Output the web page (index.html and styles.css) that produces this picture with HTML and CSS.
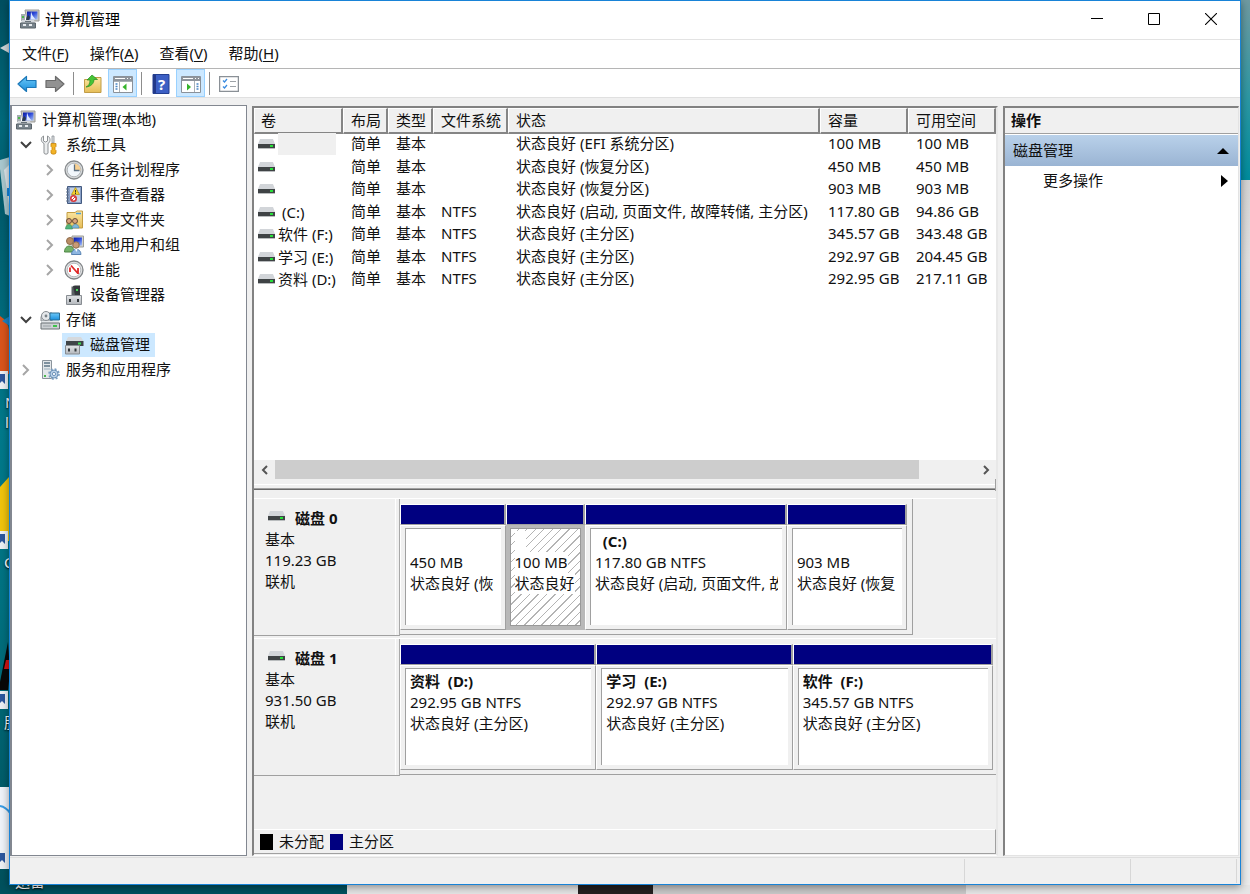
FILE: index.html
```html
<!DOCTYPE html>
<html lang="zh-CN">
<head>
<meta charset="utf-8">
<title>计算机管理</title>
<link rel="stylesheet" href="styles.css">
</head>
<body>
<svg class="defs" aria-hidden="true">
  <defs>
    <linearGradient id="g-screen" x1="0" y1="0" x2="1" y2="1"><stop offset="0" stop-color="#0a1a9c"/><stop offset=".45" stop-color="#2a46d8"/><stop offset="1" stop-color="#a9c4f5"/></linearGradient>
    <linearGradient id="g-case" x1="0" y1="0" x2="0" y2="1"><stop offset="0" stop-color="#e2e4e6"/><stop offset="1" stop-color="#b4b8bd"/></linearGradient>
    <linearGradient id="g-blue" x1="0" y1="0" x2="0" y2="1"><stop offset="0" stop-color="#6cc8f8"/><stop offset="1" stop-color="#1a8fdc"/></linearGradient>
    <linearGradient id="g-folder" x1="0" y1="0" x2="0" y2="1"><stop offset="0" stop-color="#fbe7a4"/><stop offset="1" stop-color="#e6bd58"/></linearGradient>
    <symbol id="i-computer" viewBox="0 0 20 20">
      <path d="M5 1h14v11H7z" fill="#c9c9c4" stroke="#9a9a98"/><path d="M7 2.500h10.500v8H7z" fill="url(#g-screen)"/>
      <path d="M11 2.500l1.500 4 3 4h-5z" fill="#dce8ff"/><path d="M1 5h4v7H1z" fill="#a7adb3"/><path d="M2 7h2v2H2z" fill="#4db84a"/>
      <path d="M6 12c0-3 1-5 2.500-6l1.500 2-1 4z" fill="#2b3950"/><path d="M2 11h12l1 3H1z" fill="#d2d6da"/>
      <path d="M.500 14h15v5H.500z" fill="#79848c" stroke="#5b646b"/><path d="M3 15h3v2H3zM9 15h3v2H9z" fill="#e8ecef"/><path d="M5 12.500h6" stroke="#68727a" fill="none"/>
    </symbol>
    <symbol id="i-tools" viewBox="0 0 20 20">
      <path d="M3.500 1v5l2 1 2-1V1c3 1 3.500 6 .500 7.500V18c0 1.500-4 1.500-4 0V8.500C0 6.500 1 2 3.500 1z" fill="#eceeef" stroke="#8d9194"/>
      <path d="M12 1h2v7h-2z" fill="#dfe3e6" stroke="#8b9094" stroke-width=".8"/><path d="M11 8.500h5v3l-1 1v2l1 1v2.500c0 1.500-5 1.500-5 0v-2.500l1-1v-2l-1-1z" fill="#f2b327" stroke="#c4830c" stroke-width=".8"/>
    </symbol>
    <symbol id="i-clock" viewBox="0 0 20 20">
      <circle cx="10" cy="10" r="9" fill="#d8dadb" stroke="#85898c" stroke-width="1.300"/><circle cx="10" cy="10" r="6.800" fill="#f1f6fb" stroke="#b1b6ba"/>
      <path d="M10.500 3.500a6.500 6.500 0 0 1 6 7h-6z" fill="#f6cf91"/><path d="M10.500 4.500v6h5" fill="none" stroke="#5d7082" stroke-width="1.300"/>
    </symbol>
    <symbol id="i-event" viewBox="0 0 20 20">
      <path d="M3.500 1.500h14v17h-14z" fill="#8aa0c6" stroke="#42597f"/><path d="M6 3h10v14H6z" fill="#c3d0e4"/>
      <path d="M2 4h3M2 7h3M2 10h3M2 13h3M2 16h3" stroke="#66778e" stroke-width="1.200"/><path d="M11.500 2.500l4 7h-8z" fill="#f6d22e" stroke="#b08c0c" stroke-width=".7"/>
      <path d="M11.500 5v2.500M11.500 8v1" stroke="#333"/><circle cx="9.500" cy="13.500" r="2.700" fill="#fff" stroke="#d5363a" stroke-width="1.600"/><path d="M8 15l3-3" stroke="#d5363a"/>
    </symbol>
    <symbol id="i-share" viewBox="0 0 20 20">
      <path d="M3 2.500h8l2-1.500h5.500v17H3z" fill="url(#g-folder)" stroke="#c39d43"/><path d="M12 3.500h5" stroke="#4aa0d8" stroke-width="1.500"/>
      <circle cx="5" cy="11" r="2.500" fill="#d9a57d" stroke="#4b3428" stroke-width=".8"/><circle cx="11" cy="11" r="2.500" fill="#d9a57d" stroke="#4b3428" stroke-width=".8"/>
      <path d="M1.500 19c0-6 7-6 7 0z" fill="#53b57c" stroke="#2e8a59" stroke-width=".6"/><path d="M8 18c0-5 7-5 7 0z" fill="#7db7da" stroke="#4584ae" stroke-width=".6"/>
    </symbol>
    <symbol id="i-users" viewBox="0 0 20 20">
      <path d="M8 1h11.500v11H8z" fill="#d3d3cc" stroke="#9d9d98"/><path d="M9.500 2.500h8.500v8H9.500z" fill="url(#g-screen)"/>
      <circle cx="6" cy="6" r="3.500" fill="#b98c64" stroke="#8f6c4c"/><circle cx="12" cy="10" r="3.200" fill="#c99b75" stroke="#94704f"/>
      <path d="M.500 17C.500 9 10 9 10 17z" fill="#74b26a" stroke="#4c8643"/><path d="M7.500 19.500c0-7 9.500-7 9.500 0z" fill="#8fb7e2" stroke="#5b85b4"/><path d="M11 14l1.300 3 1.300-3z" fill="#fff"/>
    </symbol>
    <symbol id="i-perf" viewBox="0 0 20 20">
      <circle cx="10" cy="10" r="9" fill="#e0e1e2" stroke="#808487" stroke-width="1.300"/><circle cx="10" cy="10" r="6.800" fill="#fff" stroke="#b7babd"/>
      <path d="M6 12V7.500M7 5.500l7 8M14 8v6" fill="none" stroke="#df2828" stroke-width="1.800"/>
    </symbol>
    <symbol id="i-device" viewBox="0 0 20 20">
      <path d="M7.500 1.500h8.500v9H7.500z" fill="#5b6064"/><path d="M9 1l2-.500h5v10h-5z" fill="#34383b"/><path d="M12 4h2v2h-2z" fill="#46d65a"/>
      <path d="M2.500 10.500h15v9h-15z" fill="url(#g-case)" stroke="#888d92"/><path d="M5 14h2v3H5zM13 14h2v3h-2z" fill="#33383c"/>
    </symbol>
    <symbol id="i-storage" viewBox="0 0 20 20">
      <path d="M1 7l2-4h9v8H1z" fill="#cdd1d4" stroke="#8c9195"/><circle cx="6" cy="6" r="4.500" fill="#e4e7ea" stroke="#878d92"/><circle cx="6" cy="6" r="1.400" fill="#7a8288"/>
      <path d="M10 3h9.500v7H10z" fill="url(#g-blue)" stroke="#2b6d92"/><path d="M2 11h17l1 2H1z" fill="#e4e7ea"/><path d="M1 13h18.500v6H1z" fill="#cdd1d4" stroke="#6d7377"/><path d="M13 15h4v2h-4z" fill="#3fc34c"/><path d="M3 16h8" stroke="#9aa0a5"/>
    </symbol>
    <symbol id="i-disks" viewBox="0 0 20 20">
      <path d="M4 2h13l2.500 4H2z" fill="#d5d9dd"/><path d="M2 6h17.500v5H2z" fill="#3f4447"/><path d="M14 7.500h3v2h-3z" fill="#3ddc54"/>
      <path d="M1.500 10.500h14v8.500h-14z" fill="url(#g-case)" stroke="#878c91"/><path d="M4 13.500h2v3H4zM10.500 13.500h2v3h-2z" fill="#33383c"/>
    </symbol>
    <symbol id="i-services" viewBox="0 0 20 20">
      <path d="M2.500.500h9v18h-9z" fill="#e3e7ea" stroke="#8b949c"/><path d="M4 3h6M4 6h6" stroke="#5d7586" stroke-width="1.400"/><path d="M4 9h6" stroke="#9db0bd"/><path d="M4 15h2v2H4z" fill="#48b850"/>
      <circle cx="14" cy="14" r="4" fill="#b9d0e8" stroke="#6f93b8"/><circle cx="14" cy="14" r="5" fill="none" stroke="#7b9dc0" stroke-width="1.600" stroke-dasharray="2 1.930"/><circle cx="14" cy="14" r="1.600" fill="#fff" stroke="#6f93b8"/>
    </symbol>
    <symbol id="i-drive" viewBox="0 0 17 10">
      <path d="M2 0h13l2 5H0z" fill="#d2d5d9"/><path d="M0 5h17v4H0z" fill="#3f4345"/><path d="M0 9h17v1H0z" fill="#b9bcbe"/><path d="M12 6h3v2h-3z" fill="#27e03a"/>
    </symbol>
    <symbol id="i-arrow" viewBox="0 0 20 18">
      <path d="M1 9l8.500-7.500v4H19v7H9.500v4z" stroke-width="1.200" stroke-linejoin="round"/>
    </symbol>
    <symbol id="i-pane" viewBox="0 0 20 18">
      <path d="M.500 1.500h19v16H.500z" fill="#fff" stroke="#8a9199"/><path d="M1 2h18v4H1z" fill="#8d949c"/><path d="M2 3.500h10" stroke="#fff"/><path d="M14 3h1v1h-1zM17 3h1v1h-1z" fill="#fff"/>
      <path d="M6.500 6v11M1 6.500h18" stroke="#a9b0b6"/><path d="M2.500 9h2M2.500 11.500h2M2.500 14h2" stroke="#4a86c4" stroke-width="1.300"/>
    </symbol>
  </defs>
</svg>

<div class="desktop" aria-hidden="true">
  <svg class="desktop-art" width="16" height="894" viewBox="0 0 16 894">
    <path d="M0 48l9-5v10z" fill="#cfd6da"/><path d="M0 160l10-3v59l-5-2-5-45z" fill="#a9c8cf"/><path d="M4 170l6-6v48z" fill="#dfe8ec"/><path d="M7 188h4v8H7z" fill="#1687dc"/>
    <path d="M0 316q8 5 9 14v44H0z" fill="#d9541c"/><path d="M2 321l8-5v10z" fill="#1c83c4"/>
    <path d="M0 487l9-10v64H0z" fill="#f0c30c"/>
    <path d="M8 642l2 30-2 18H0v-8z" fill="#080808"/><path d="M6 660h4v9H4z" fill="#d41414"/><path d="M0 787h10v82H0z" fill="#eef3f9"/><path d="M0 806q6 1 10 7" fill="none" stroke="#379ce4" stroke-width="2"/>
    <g fill="#edf1f4"><path d="M0 371h8v18H0zM0 531h8v18H0zM0 691h8v18H0zM0 850h8v18H0z"/></g>
    <g fill="#2c579d"><path d="M0 374h5v10l-3-3-2 2zM0 534h5v10l-3-3-2 2zM0 694h5v10l-3-3-2 2zM0 853h5v10l-3-3-2 2z"/></g>
  </svg>
  <span class="desktop-label label-n">N</span>
  <span class="desktop-label label-l">l</span>
  <span class="desktop-label label-c">C</span>
  <span class="desktop-label label-g">股</span>
  <span class="desktop-label label-x">迅雷</span>
</div>

<main class="window">
  <header class="titlebar">
    <svg class="icon"><use href="#i-computer"/></svg>
    <h1 class="title">计算机管理</h1>
    <button class="win-btn" aria-label="最小化"><svg width="12" height="12"><path d="M0 5.500h12" stroke="#000"/></svg></button>
    <button class="win-btn" aria-label="最大化"><svg width="12" height="12"><path d="M.500.500h11v11H.500z" fill="none" stroke="#000"/></svg></button>
    <button class="win-btn" aria-label="关闭"><svg width="12" height="12"><path d="M0 0l12 12M12 0L0 12" stroke="#000" stroke-width="1.100"/></svg></button>
  </header>

  <nav class="menubar">
    <button class="menu">文件(<u>F</u>)</button>
    <button class="menu">操作(<u>A</u>)</button>
    <button class="menu">查看(<u>V</u>)</button>
    <button class="menu">帮助(<u>H</u>)</button>
  </nav>

  <div class="toolbar">
    <button class="tool" aria-label="后退"><svg width="20" height="18" fill="url(#g-blue)" stroke="#1c78b8"><use href="#i-arrow"/></svg></button>
    <button class="tool" aria-label="前进"><svg class="flip" width="20" height="18" fill="#929292" stroke="#6b6b6b"><use href="#i-arrow"/></svg></button>
    <span class="tool-sep"></span>
    <button class="tool" aria-label="上移"><svg width="20" height="20" viewBox="0 0 20 20"><path d="M1.500 5.500h6l2-2h8.500v15h-16.500z" fill="url(#g-folder)" stroke="#c19c47"/><path d="M3 13c3-1 4-4 4-7H4l5-5 5.500 4.500H11c0 4-3 7-8 7.500z" fill="#45c437" stroke="#278c20" stroke-width=".7"/></svg></button>
    <button class="tool tool-on" aria-label="显示/隐藏控制台树"><svg width="20" height="18" viewBox="0 0 20 18"><use href="#i-pane"/><path d="M13.500 8.500v7l-4-3.500z" fill="#35b42b"/></svg></button>
    <span class="tool-sep"></span>
    <button class="tool" aria-label="帮助"><svg width="18" height="20" viewBox="0 0 18 20"><path d="M1 .500h16v19H1z" fill="#3c5fc4" stroke="#233f91"/><path d="M1 1h3v18H1z" fill="#22398a"/><text class="help-mark" x="6" y="16">?</text></svg></button>
    <button class="tool tool-on" aria-label="显示/隐藏操作窗格"><svg width="20" height="18" viewBox="0 0 20 18"><path d="M.500 1.500h19v16H.500z" fill="#fff" stroke="#8a9199"/><path d="M1 2h18v4H1z" fill="#8d949c"/><path d="M2 3.500h10" stroke="#fff"/><path d="M14 3h1v1h-1zM17 3h1v1h-1z" fill="#fff"/><path d="M13.500 6v11" stroke="#a9b0b6"/><path d="M15.500 9h2M15.500 11.500h2M15.500 14h2" stroke="#4a86c4" stroke-width="1.300"/><path d="M6 8.500v7l4-3.500z" fill="#35b42b"/></svg></button>
    <span class="tool-sep"></span>
    <button class="tool" aria-label="属性"><svg width="20" height="16" viewBox="0 0 20 16"><path d="M.500.500h19v15H.500z" fill="#fff" stroke="#8a9096" stroke-width="1.500"/><path d="M4 4.500l1.500 1.500L8 3M4 10.500l1.500 1.500L8 9" fill="none" stroke="#3a8be0" stroke-width="1.300"/><path d="M11 5.500h6M11 10.500h6" stroke="#9da2a7"/></svg></button>
  </div>

  <div class="panes">
    <aside class="tree">
      <ul class="tree-list">
        <li class="node root"><svg class="icon"><use href="#i-computer"/></svg><span class="node-text">计算机管理(本地)</span></li>
        <li class="node l1"><button class="twist open" aria-label="折叠"><svg width="12" height="12"><path d="M1 3l5 5 5-5"/></svg></button><svg class="icon"><use href="#i-tools"/></svg><span class="node-text">系统工具</span></li>
        <li class="node l2"><button class="twist" aria-label="展开"><svg width="12" height="12"><path d="M3 1l5 5-5 5"/></svg></button><svg class="icon"><use href="#i-clock"/></svg><span class="node-text">任务计划程序</span></li>
        <li class="node l2"><button class="twist" aria-label="展开"><svg width="12" height="12"><path d="M3 1l5 5-5 5"/></svg></button><svg class="icon"><use href="#i-event"/></svg><span class="node-text">事件查看器</span></li>
        <li class="node l2"><button class="twist" aria-label="展开"><svg width="12" height="12"><path d="M3 1l5 5-5 5"/></svg></button><svg class="icon"><use href="#i-share"/></svg><span class="node-text">共享文件夹</span></li>
        <li class="node l2"><button class="twist" aria-label="展开"><svg width="12" height="12"><path d="M3 1l5 5-5 5"/></svg></button><svg class="icon"><use href="#i-users"/></svg><span class="node-text">本地用户和组</span></li>
        <li class="node l2"><button class="twist" aria-label="展开"><svg width="12" height="12"><path d="M3 1l5 5-5 5"/></svg></button><svg class="icon"><use href="#i-perf"/></svg><span class="node-text">性能</span></li>
        <li class="node l2"><span class="twist"></span><svg class="icon"><use href="#i-device"/></svg><span class="node-text">设备管理器</span></li>
        <li class="node l1"><button class="twist open" aria-label="折叠"><svg width="12" height="12"><path d="M1 3l5 5 5-5"/></svg></button><svg class="icon"><use href="#i-storage"/></svg><span class="node-text">存储</span></li>
        <li class="node l2"><span class="twist"></span><span class="selected"><svg class="icon"><use href="#i-disks"/></svg><span class="node-text">磁盘管理</span></span></li>
        <li class="node l1"><button class="twist" aria-label="展开"><svg width="12" height="12"><path d="M3 1l5 5-5 5"/></svg></button><svg class="icon"><use href="#i-services"/></svg><span class="node-text">服务和应用程序</span></li>
      </ul>
    </aside>

    <section class="center">
      <div class="volumes">
        <table class="volume-table">
          <colgroup><col class="c-volume"><col class="c-short"><col class="c-short"><col class="c-fs"><col><col class="c-size"><col class="c-size"></colgroup>
          <thead><tr><th>卷</th><th>布局</th><th>类型</th><th>文件系统</th><th>状态</th><th>容量</th><th>可用空间</th></tr></thead>
          <tbody>
            <tr><td><span class="volume"><svg class="drive"><use href="#i-drive"/></svg><span class="blank"></span></span></td><td>简单</td><td>基本</td><td></td><td>状态良好 (EFI 系统分区)</td><td>100 MB</td><td>100 MB</td></tr>
            <tr><td><span class="volume"><svg class="drive"><use href="#i-drive"/></svg></span></td><td>简单</td><td>基本</td><td></td><td>状态良好 (恢复分区)</td><td>450 MB</td><td>450 MB</td></tr>
            <tr><td><span class="volume"><svg class="drive"><use href="#i-drive"/></svg></span></td><td>简单</td><td>基本</td><td></td><td>状态良好 (恢复分区)</td><td>903 MB</td><td>903 MB</td></tr>
            <tr><td><span class="volume"><svg class="drive"><use href="#i-drive"/></svg>&nbsp;(C:)</span></td><td>简单</td><td>基本</td><td>NTFS</td><td>状态良好 (启动, 页面文件, 故障转储, 主分区)</td><td>117.80 GB</td><td>94.86 GB</td></tr>
            <tr><td><span class="volume"><svg class="drive"><use href="#i-drive"/></svg>软件 (F:)</span></td><td>简单</td><td>基本</td><td>NTFS</td><td>状态良好 (主分区)</td><td>345.57 GB</td><td>343.48 GB</td></tr>
            <tr><td><span class="volume"><svg class="drive"><use href="#i-drive"/></svg>学习 (E:)</span></td><td>简单</td><td>基本</td><td>NTFS</td><td>状态良好 (主分区)</td><td>292.97 GB</td><td>204.45 GB</td></tr>
            <tr><td><span class="volume"><svg class="drive"><use href="#i-drive"/></svg>资料 (D:)</span></td><td>简单</td><td>基本</td><td>NTFS</td><td>状态良好 (主分区)</td><td>292.95 GB</td><td>217.11 GB</td></tr>
          </tbody>
        </table>
        <div class="scrollbar">
          <button class="scroll-btn" aria-label="向左滚动"><svg width="10" height="10"><path d="M7 1L3 5l4 4"/></svg></button>
          <div class="scroll-track"><div class="scroll-thumb"></div></div>
          <button class="scroll-btn" aria-label="向右滚动"><svg width="10" height="10"><path d="M3 1l4 4-4 4"/></svg></button>
        </div>
        <div class="splitter"></div>
      </div>

      <div class="disks">
        <div class="disk-rows">
          <div class="disk">
            <div class="disk-info">
              <h2 class="disk-name"><svg class="drive"><use href="#i-drive"/></svg>磁盘 0</h2>
              <p>基本</p><p>119.23 GB</p><p>联机</p>
            </div>
            <div class="parts parts-small">
              <div class="part" style="flex-grow:105"><div class="bar"></div><div class="part-box"><div class="part-body"><p class="part-name">&nbsp;</p><p>450 MB</p><p>状态良好 (恢</p></div></div></div>
              <div class="part active" style="flex-grow:79"><div class="bar"></div><div class="part-box"><div class="part-body"><p class="part-name"><span>&nbsp;&nbsp;&nbsp;</span></p><p><span>100 MB</span></p><p><span>状态良好</span></p></div></div></div>
              <div class="part" style="flex-grow:201"><div class="bar"></div><div class="part-box"><div class="part-body"><p class="part-name">&nbsp; (C:)</p><p>117.80 GB NTFS</p><p>状态良好 (启动, 页面文件, 故</p></div></div></div>
              <div class="part" style="flex-grow:119"><div class="bar"></div><div class="part-box"><div class="part-body"><p class="part-name">&nbsp;</p><p>903 MB</p><p>状态良好 (恢复</p></div></div></div>
            </div>
          </div>
          <div class="disk">
            <div class="disk-info">
              <h2 class="disk-name"><svg class="drive"><use href="#i-drive"/></svg>磁盘 1</h2>
              <p>基本</p><p>931.50 GB</p><p>联机</p>
            </div>
            <div class="parts parts-full">
              <div class="part" style="flex-grow:196"><div class="bar"></div><div class="part-box"><div class="part-body"><p class="part-name">资料 &nbsp;(D:)</p><p>292.95 GB NTFS</p><p>状态良好 (主分区)</p></div></div></div>
              <div class="part" style="flex-grow:196"><div class="bar"></div><div class="part-box"><div class="part-body"><p class="part-name">学习 &nbsp;(E:)</p><p>292.97 GB NTFS</p><p>状态良好 (主分区)</p></div></div></div>
              <div class="part" style="flex-grow:200"><div class="bar"></div><div class="part-box"><div class="part-body"><p class="part-name">软件 &nbsp;(F:)</p><p>345.57 GB NTFS</p><p>状态良好 (主分区)</p></div></div></div>
            </div>
          </div>
        </div>
        <div class="legend">
          <span class="swatch black"></span><span class="legend-text">未分配</span>
          <span class="swatch navy"></span><span class="legend-text">主分区</span>
        </div>
      </div>
    </section>

    <aside class="actions">
      <h2 class="actions-title">操作</h2>
      <button class="action-group"><span>磁盘管理</span><svg width="12" height="6"><path d="M0 6l6-6 6 6z"/></svg></button>
      <button class="action-item"><span>更多操作</span><svg width="7" height="12"><path d="M0 0l7 6-7 6z"/></svg></button>
    </aside>
  </div>

  <footer class="statusbar"><span class="status-main"></span><span class="status-mid"></span><span class="status-end"></span></footer>
</main>
</body>
</html>
```
FILE: styles.css
```css
* { box-sizing: border-box; }

body {
  margin: 0;
  height: 100vh;
  padding: 0 9px 9px;
  overflow: hidden;
  color: #111;
  font: 15px/21px "Noto Sans", "Noto Sans CJK SC", sans-serif;
  background:
    linear-gradient(#00515e, #00515e) left bottom / 347px 9px no-repeat,
    linear-gradient(90deg, #e4e4e4 0 231px, #242020 231px 306px, #c8c7c7 306px 619px, #e6e6e6 619px) 347px 100% / 100% 9px no-repeat,
    linear-gradient(#6f9aa1, #2b97a3 100px, #008c9d 180px, #d4d4d4 180px, #e0e0e0 260px, #d6d6d6 800px, #ececec 800px) right top / 9px 100% no-repeat,
    linear-gradient(#004f60, #006a7c 120px, #005b6c 200px, #007a8b 430px, #007281 600px, #00505c);
}

h1, h2, p, ul { margin: 0; padding: 0; font: inherit; }

button {
  margin: 0;
  padding: 0;
  border: 0;
  background: none;
  color: inherit;
  font: inherit;
}

svg { display: block; flex: none; }
.defs { position: absolute; width: 0; height: 0; }
.icon { width: 20px; height: 20px; }
.drive { width: 17px; height: 10px; }

.desktop-art { position: absolute; left: 0; top: 0; }
.desktop-label { position: absolute; color: #fff; text-shadow: 0 1px 2px #000; }
.label-n { left: 5px; top: 392px; }
.label-l { left: 5px; top: 412px; }
.label-c { left: 4px; top: 552px; }
.label-g { left: 4px; top: 712px; }
.label-x { left: 15px; top: 871px; }

.window {
  position: relative;
  display: flex;
  flex-direction: column;
  height: 100%;
  border: 1px solid #1883d7;
  background: #f0f0f0;
  box-shadow: 0 2px 8px #0006;
}

.titlebar {
  display: flex;
  align-items: center;
  height: 39px;
  padding: 0 1px 2px 10px;
  background: #fff;
  border-bottom: 1px solid #e3e3e3;
}
.title { flex: 1; margin-left: 5px; color: #000; }
.win-btn { display: grid; place-items: center; width: 57px; height: 36px; }

.menubar {
  display: flex;
  gap: 21px;
  height: 29px;
  padding: 0 0 2px 12px;
  background: #fff;
  border-bottom: 1px solid #b5b5b5;
}
.menu u { text-underline-offset: 2px; }

.toolbar {
  display: flex;
  align-items: center;
  height: 29px;
  padding-left: 3px;
  background: #fff;
  border-bottom: 1px solid #e0e0e0;
}
.tool { display: grid; place-items: center; width: 28px; height: 28px; padding-top: 2px; }
.tool-on { width: 29px; margin-left: 1px; padding-top: 1px; background: #cce8ff; border: 1px solid #99d1ff; }
.tool-sep { width: 2px; height: 23px; margin: 0 4px; border-left: 1px solid #8d8d8d; }
.flip { transform: scaleX(-1); }
.help-mark { fill: #fff; font: bold 15px "Noto Sans", sans-serif; }

.panes {
  flex: 1;
  min-height: 0;
  display: grid;
  grid-template-columns: 237px minmax(0, 1fr) 236px;
  column-gap: 5px;
  padding: 7px 1px 1px 0;
}

.tree {
  border: 1px solid #828790;
  border-left-width: 2px;
  background: #fff;
}
.tree-list { list-style: none; padding-top: 1px; }
.node { display: flex; align-items: center; height: 25px; white-space: nowrap; }
.root { padding-left: 4px; }
.l1 { padding-left: 8px; }
.l2 { padding-left: 32px; }
.node-text { margin-left: 6px; }
.twist { display: grid; place-items: center; width: 12px; height: 20px; margin-right: 8px; }
.twist path { fill: none; stroke: #a6a6a6; stroke-width: 2; }
.open path { stroke: #404040; }
.selected {
  display: flex;
  align-items: center;
  height: 24px;
  margin-left: -2px;
  padding: 0 5px 0 2px;
  background: #cce8ff;
}

.center {
  display: flex;
  flex-direction: column;
  min-height: 0;
  margin-top: 1px;
  border: 2px solid #828282;
  border-right-color: #e8e8e8;
  border-bottom: 1px solid #fff;
}
.volumes { flex: 382 1 0; min-height: 0; display: flex; flex-direction: column; background: #fff; }

.volume-table { width: 100%; table-layout: fixed; border-collapse: separate; border-spacing: 0; white-space: nowrap; }
.c-volume { width: 89px; }
.c-size { width: 88px; }
.c-short { width: 45px; }
.c-fs { width: 75px; }
.volume-table th {
  height: 26px;
  padding: 0 0 0 7px;
  text-align: left;
  font-weight: normal;
  background: #f0f0f0;
  border: 1px solid #fff;
  border-right: 2px solid #858585;
  border-bottom: 2px solid #858585;
}
.volume-table th:first-child { padding-left: 6px; }
.volume-table td { height: 22px; padding: 0 0 0 8px; line-height: 19px; vertical-align: top; }
.volume-table tbody tr:nth-child(odd) td { height: 23px; }
.volume-table td:first-child { padding-left: 4px; }
.volume { display: flex; align-items: center; gap: 3px; height: 20px; }
.blank { width: 58px; height: 22px; background: #f0f0f0; }

.scrollbar { display: flex; height: 19px; margin-top: auto; background: #f0f0f0; }
.scroll-btn { display: grid; place-items: center; width: 21px; }
.scroll-btn path { fill: none; stroke: #555; stroke-width: 2; }
.scroll-track { flex: 1; }
.scroll-thumb { width: 92%; height: 100%; background: #cdcdcd; }
.splitter {
  height: 12px;
  border-right: 1px solid #a0a0a0;
  background: linear-gradient(#f0f0f0 5px, #fff 5px 6px, #f0f0f0 6px 9px, #a0a0a0 9px 10px, #696969 10px 11px, #f0f0f0 11px);
}

.disks { flex: 363 1 0; min-height: 0; display: flex; flex-direction: column; }
.disk-rows { flex: 1; display: flex; flex-direction: column; gap: 2px; padding-top: 7px; }
.disk { display: grid; grid-template-columns: 146px minmax(0, 1fr); height: 138px; border-top: 1px solid #fff; }
.disk-info {
  padding: 9px 0 0 11px;
  border-right: 1px solid #a8a8a8;
  border-bottom: 1px solid #a0a0a0;
  background: linear-gradient(#fff, #fff) right 3px top / 1px 100% no-repeat;
}
.disk-name { display: flex; gap: 10px; padding-left: 3px; font-weight: bold; }
.disk-name .drive { margin-top: 3px; }

.parts { display: flex; height: 136px; padding: 5px 5px 4px 0; border-bottom: 1px solid #a0a0a0; }
.parts-small { width: 86%; border-right: 1px solid #a0a0a0; }
.parts-full { padding-right: 3px; }
.part { flex: 1 1 0; min-width: 0; display: flex; flex-direction: column; }
.bar {
  height: 21px;
  background: #000080;
  border: 1px solid #fff;
  border-right: 2px solid #a0a0a0;
  border-bottom-color: #a0a0a0;
}
.part-box {
  flex: 1;
  min-height: 0;
  padding: 2px 4px 4px;
  border: 1px solid #fff;
  border-right-color: #a0a0a0;
  border-bottom-color: #a0a0a0;
}
.part-body {
  height: 100%;
  padding: 2px 4px 0;
  overflow: hidden;
  white-space: nowrap;
  background: #fff;
  border-left: 1px solid #a0a0a0;
  border-top: 1px solid #a0a0a0;
}
.part-body p { overflow: hidden; }
.part-name { font-weight: bold; }
.active .part-box { padding: 2px 3px 3px; background: #b8b8b8; border-color: #b8b8b8; }
.active .part-body {
  border: 1px solid #999;
  background: repeating-linear-gradient(135deg, #fff 0 5px, #b4b4b4 5px 6px);
}
.active .part-body span { display: inline-block; background: #fff; }

.legend {
  display: flex;
  align-items: center;
  gap: 6px;
  height: 25px;
  margin-bottom: 1px;
  padding-left: 6px;
  border-top: 1px solid #fff;
  border-right: 1px solid #a0a0a0;
  border-bottom: 1px solid #a0a0a0;
}
.swatch { width: 13px; height: 16px; }
.black { background: #000; }
.navy { background: #000080; }

.actions {
  display: flex;
  flex-direction: column;
  margin-top: 1px;
  background: #fff;
  border: 2px solid #828282;
  border-right: 1px solid #e3e3e3;
  border-bottom: 1px solid #e3e3e3;
}
.actions-title { height: 26px; padding: 2px 6px; font-weight: bold; background: #f0f0f0; border-bottom: 1px solid #a0a0a0; }
.action-group {
  display: flex;
  align-items: center;
  justify-content: space-between;
  height: 31px;
  margin-top: 1px;
  padding: 0 9px 0 8px;
  background: linear-gradient(#b9d1ea, #9ab4d3);
}
.action-item { display: flex; align-items: center; justify-content: space-between; height: 29px; padding: 0 10px 0 38px; }

.statusbar { display: flex; height: 27px; padding: 1px 3px 1px 0; border-top: 1px solid #dedede; }
.statusbar span { border-right: 1px solid #d7d7d7; }
.status-main { flex: 1; }
.status-mid { width: 166px; }
.status-end { width: 106px; }
```
